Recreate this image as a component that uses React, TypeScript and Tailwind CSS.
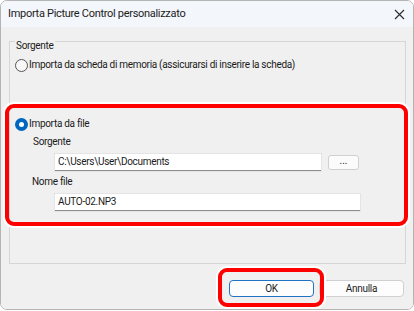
import React from "react";

function Radio({ checked }: { checked?: boolean }) {
  return checked ? (
    <span className="w-[13px] h-[13px] rounded-full bg-[#0067c0] flex items-center justify-center shrink-0">
      <span className="w-[5px] h-[5px] rounded-full bg-white" />
    </span>
  ) : (
    <span className="w-[13px] h-[13px] rounded-full border border-[#555] bg-[#f7f7f7] shrink-0 box-border" />
  );
}

export default function App() {
  return (
    <div
      className="w-[414px] h-[311px] bg-white text-[#1b1b1b] text-[10px] tracking-[-0.3px]"
      style={{ fontFamily: 'Roboto, "Noto Sans", sans-serif' }}
    >
      <div className="w-[414px] h-[310px] border border-[#b4b4b4] rounded-[7px] overflow-hidden flex flex-col box-border">
        {/* Title bar */}
        <div className="h-[26px] bg-[#f3f6fb] flex items-center justify-between pl-[7px] pr-[7px] shrink-0">
          <span className="leading-[14px] text-[11px]">Importa Picture Control personalizzato</span>
          <svg width="11" height="11" viewBox="0 0 11 11" className="mr-[1px]">
            <path d="M1 1 L10 10 M10 1 L1 10" stroke="#2a2a2a" strokeWidth="1.1" fill="none" />
          </svg>
        </div>
        {/* Body */}
        <div className="flex-1 bg-[#f0f0f0] pt-[14px] pl-[8px] flex flex-col">
          {/* Group box */}
          <div className="w-[397px] h-[223px] border border-[#d6d6d6] box-border flex flex-col">
            <span className="self-start -mt-[4px] ml-[5px] px-[1px] bg-[#f0f0f0] leading-[16px]">Sorgente</span>
            <div className="mt-[3px] ml-[5px] h-[16px] flex items-center gap-[1px]">
              <Radio />
              <span className="leading-[16px]">Importa da scheda di memoria (assicurarsi di inserire la scheda)</span>
            </div>
            {/* Highlighted section */}
            <div className="mt-[31px] -ml-[5px] -mr-[3px] border-4 border-[#ff0000] rounded-[9px] shadow-[0_0_0_2px_#ffffff] pt-[8px] pb-[11px] flex flex-col">
              <div className="ml-[6px] h-[16px] flex items-center gap-[1px]">
                <Radio checked />
                <span className="leading-[16px]">Importa da file</span>
              </div>
              <div className="mt-[2px] ml-[24px] h-[16px] leading-[16px]">Sorgente</div>
              <div className="mt-[4px] ml-[46px] flex items-center">
                <div className="w-[266px] h-[17px] bg-white border-b border-[#8c8c8c] shadow-[0_0_0_1px_#e4e4e4] pl-[3px] flex items-center leading-[16px] box-border">
                  C:\Users\User\Documents
                </div>
                <div className="ml-[7px] w-[31px] h-[15px] bg-[#fbfbfb] border border-[#d0d0d0] rounded-[3px] flex items-center justify-center leading-[10px] pb-[3px] box-border text-[10px] tracking-normal">
                  ...
                </div>
              </div>
              <div className="mt-[3px] ml-[23px] h-[16px] leading-[16px]">Nome file</div>
              <div className="mt-[4px] ml-[46px] w-[305px] h-[17px] bg-white border-b border-[#8c8c8c] shadow-[0_0_0_1px_#e4e4e4] pl-[3px] flex items-center leading-[16px] box-border">
                AUTO-02.NP3
              </div>
            </div>
          </div>
          {/* Buttons */}
          <div className="mt-[16px] ml-[220px] flex gap-[5px]">
            <div className="relative">
              <div className="w-[85px] h-[17px] bg-[#fdfdfd] border border-[#1f72c4] rounded-[4px] flex items-center justify-center leading-[14px] box-border">
                OK
              </div>
              <div className="absolute -left-[11px] -top-[12px] -right-[10px] -bottom-[10px] border-4 border-[#ff0000] rounded-[9px] shadow-[0_0_0_2px_#ffffff] z-10" />
            </div>
            <div className="w-[85px] h-[17px] bg-[#fdfdfd] border border-[#d0d0d0] rounded-[4px] flex items-center justify-center leading-[14px] box-border">
              Annulla
            </div>
          </div>
        </div>
      </div>
    </div>
  );
}
